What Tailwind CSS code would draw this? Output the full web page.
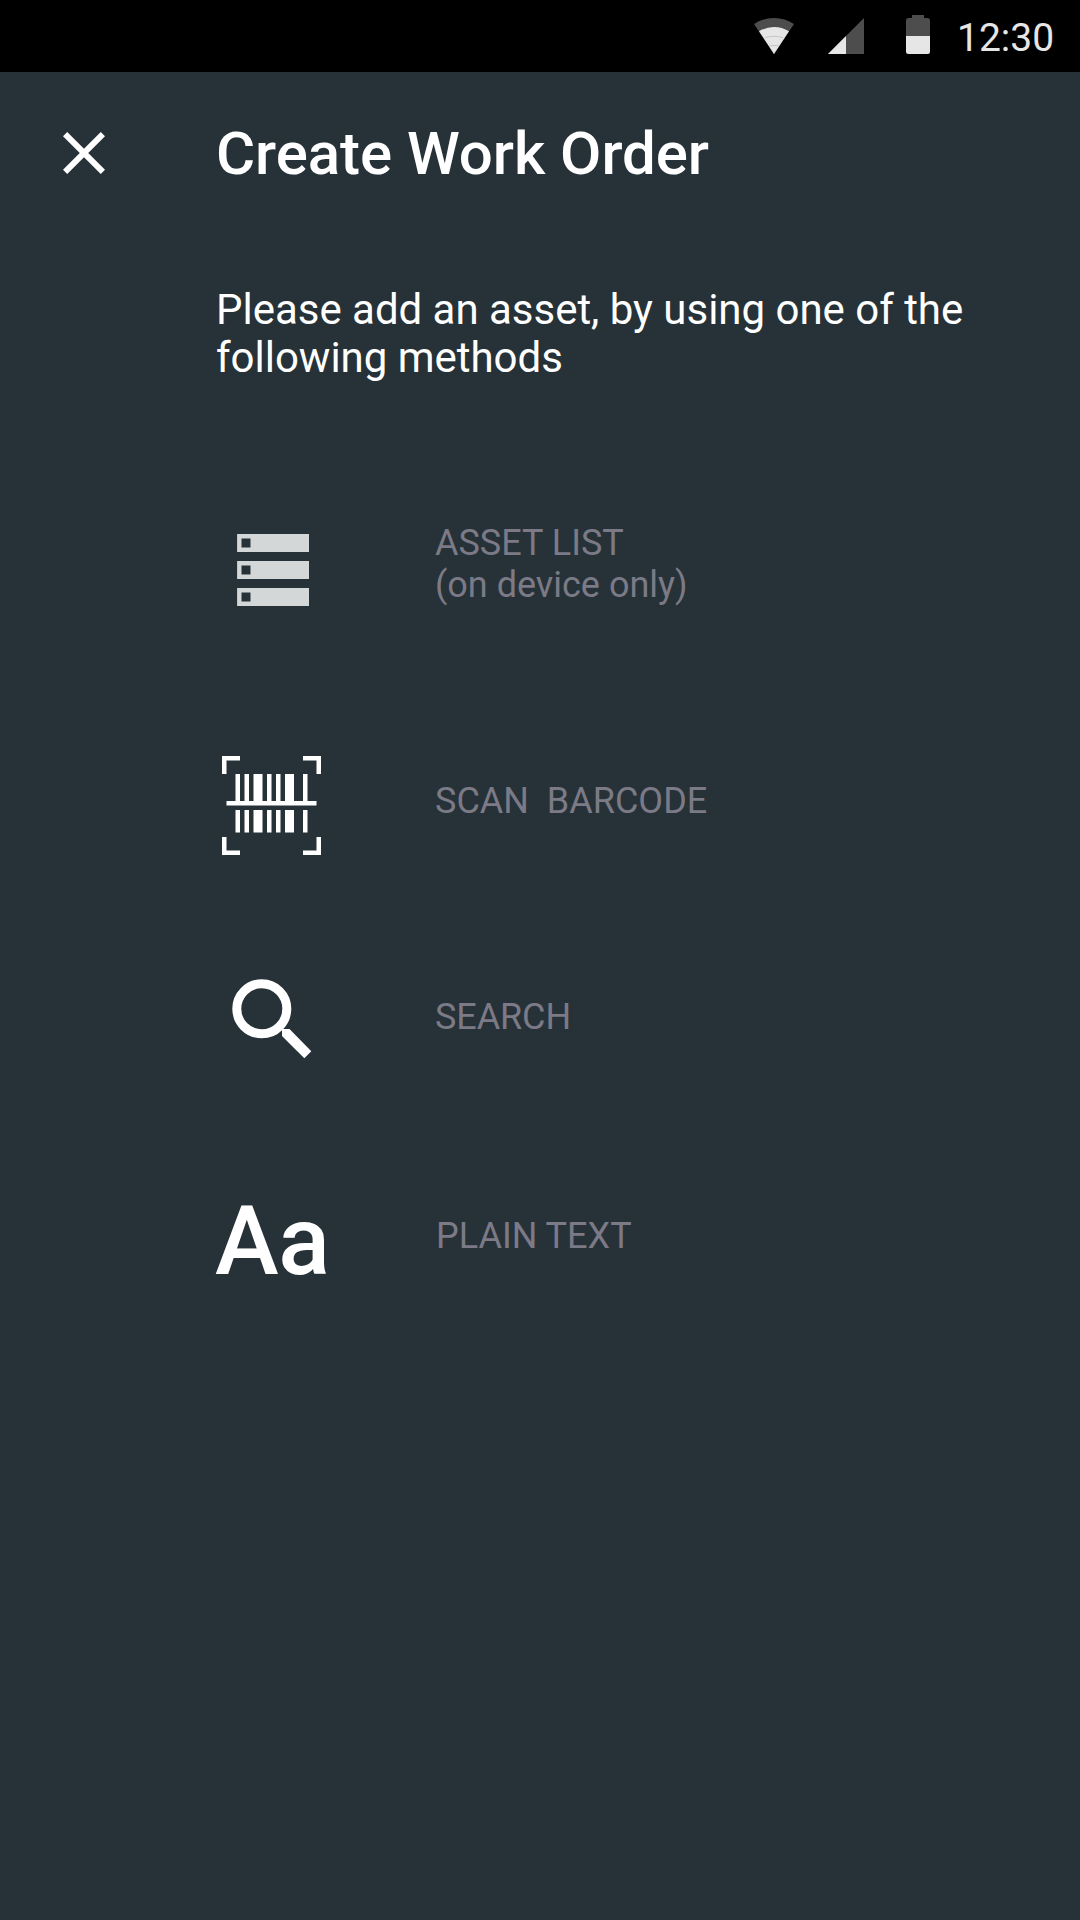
<!DOCTYPE html>
<html lang="en">
<head>
<meta charset="utf-8">
<title>Create Work Order</title>
<script src="https://cdn.jsdelivr.net/npm/@tailwindcss/browser@4"></script>
</head>
<body class="bg-[#263238] font-['Roboto',sans-serif] text-white">
<div class="flex h-[1920px] w-[1080px] flex-col overflow-hidden">
  <!-- Status bar -->
  <div class="flex h-[72px] shrink-0 items-start justify-end bg-black pr-[26px]">
    <svg class="h-[72px] w-[180px] shrink-0" viewBox="750 0 180 72">
      <path d="M774 54 754 24Q763 18 774 18T794 24Z" fill="#4d4d4d"/>
      <path d="M774 54 759 31.3Q766 27 774 27T789 31.3Z" fill="#e6e6e6"/>
      <path d="M765 37.700Q769 36.300 774 36.300T783 37.700M769 46Q774 44.800 779 46" fill="none" stroke="#bdbdbd" stroke-width=".8"/>
      <path d="M828 54 864 18V54Z" fill="#4d4d4d"/>
      <path d="M828 54 846 36V54Z" fill="#e6e6e6"/>
      <path d="M906 36V20.500Q906 18 908.500 18H912V15H924V18H927.500Q930 18 930 20.500V36Z" fill="#4d4d4d"/>
      <path d="M906 36H930V51.500Q930 54 927.500 54H908.500Q906 54 906 51.500Z" fill="#e6e6e6"/>
    </svg>
    <span class="ml-[27px] w-[97px] mt-3.5 text-[39px] leading-[48px] whitespace-nowrap text-[#e6e6e6]">12:30</span>
  </div>

  <!-- Header -->
  <header class="flex pt-[45px] pl-[63px]">
    <svg class="mt-[15px] h-[42px] w-[42px] shrink-0" viewBox="0 0 42 42" fill="none" stroke="#fff" stroke-width="6"><path d="M2.100 2.100 39.900 39.900M39.900 2.100 2.100 39.900"/></svg>
    <h1 class="mt-px ml-[111px] text-[60px] leading-[72px] font-medium tracking-[-0.05px]">Create Work Order</h1>
  </header>

  <p class="mt-24 ml-[216px] w-[800px] text-[42px] leading-[48px] tracking-[-0.02px]">Please add an asset, by using one of the<br>following methods</p>

  <main class="mt-[140px] ml-[215px] flex flex-col text-[36px] leading-[42px] text-[#7b7a86]">
    <div class="flex h-[234px] items-start">
      <div class="w-[220px] pt-3 pl-[22px]">
        <svg class="h-[72px] w-[72px]" viewBox="0 0 72 72" fill="#d3d7d8"><path fill-rule="evenodd" d="M.1 0H72V18H.1ZM4.500 4.500V13.500H13.500V4.500ZM.1 27H72V45H.1ZM4.500 31.500V40.500H13.500V31.500ZM.1 54H72V72H.1ZM4.500 58.500V67.500H13.500V58.500Z"/></svg>
      </div>
      <div>ASSET LIST<br>(on device only)</div>
    </div>
    <div class="flex h-[223px] items-start">
      <div class="w-[220px] pl-[7px]">
        <svg class="h-[99px] w-[99px]" viewBox="0 0 99 99" fill="#fff"><path d="M0 0H18V4.500H4.500V18H0ZM81 0H99V18H94.500V4.500H81ZM0 81H4.500V94.500H18V99H0ZM94.500 81H99V99H81V94.500H94.500ZM4.500 45H94.500V49.500H4.500Z"/><path d="M13.500 18H18V45H13.500ZM22.500 18H27V45H22.500ZM31.500 18H40.500V45H31.500ZM45 18H49.500V45H45ZM54 18H58.500V45H54ZM63 18H72V45H63ZM81 18H85.500V45H81ZM13.500 54H18V76.500H13.500ZM22.500 54H27V76.500H22.500ZM31.500 54H40.500V76.500H31.500ZM45 54H49.500V76.500H45ZM54 54H58.500V76.500H54ZM63 54H72V76.500H63ZM81 54H85.500V76.500H81Z"/></svg>
      </div>
      <div class="mt-6 whitespace-pre">SCAN  BARCODE</div>
    </div>
    <div class="flex h-[206px] items-start">
      <div class="w-[220px] pl-[17px]">
        <svg class="h-[80px] w-[80px]" viewBox="232 979 80 80"><circle cx="261.800" cy="1008.800" r="25" fill="none" stroke="#fff" stroke-width="9"/><path d="M282 1029H289.500L311.300 1051.300 304.300 1058.300 282 1036Z" fill="#fff"/></svg>
      </div>
      <div class="mt-[17px] tracking-[-0.1px]">SEARCH</div>
    </div>
    <div class="flex items-start">
      <div class="w-[221px] text-[96px] leading-[112px] font-medium tracking-[-0.500px] text-white">Aa</div>
      <div class="mt-[30px]">PLAIN TEXT</div>
    </div>
  </main>
</div>
</body>
</html>
